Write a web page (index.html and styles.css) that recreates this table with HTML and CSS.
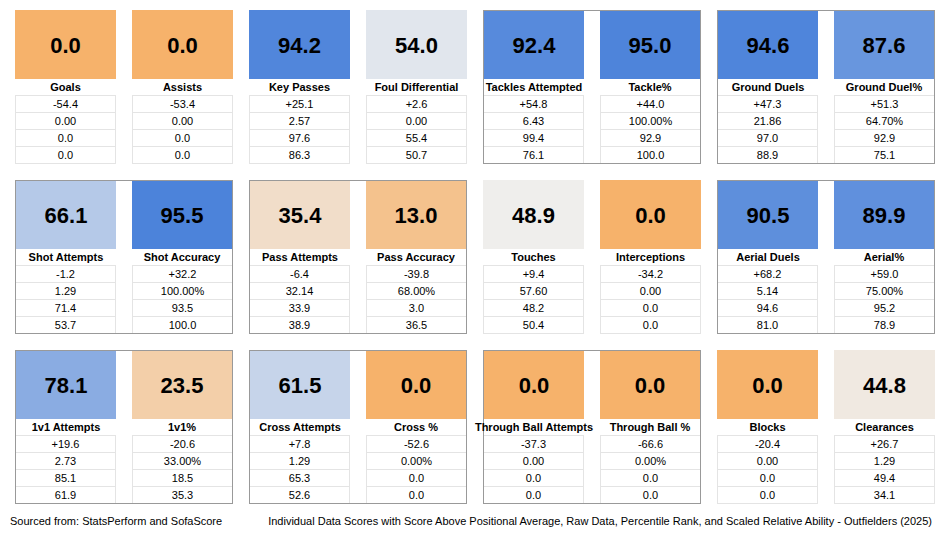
FILE: index.html
```html
<!DOCTYPE html>
<html lang="en">
<head>
<meta charset="utf-8">
<title>Individual Data Scores - Outfielders (2025)</title>
<link rel="stylesheet" href="styles.css">
</head>
<body>
<div class="sheet">
  <div class="band">
    <div class="group">
      <div class="metric"><div class="score" style="background:#F6B26B">0.0</div><div class="label">Goals</div><div class="data"><div class="row">-54.4</div><div class="row">0.00</div><div class="row">0.0</div><div class="row">0.0</div></div></div>
      <div class="metric"><div class="score" style="background:#F6B26B">0.0</div><div class="label">Assists</div><div class="data"><div class="row">-53.4</div><div class="row">0.00</div><div class="row">0.0</div><div class="row">0.0</div></div></div>
    </div>
    <div class="group">
      <div class="metric"><div class="score" style="background:#5186DB">94.2</div><div class="label">Key Passes</div><div class="data"><div class="row">+25.1</div><div class="row">2.57</div><div class="row">97.6</div><div class="row">86.3</div></div></div>
      <div class="metric"><div class="score" style="background:#E1E6ED">54.0</div><div class="label">Foul Differential</div><div class="data"><div class="row">+2.6</div><div class="row">0.00</div><div class="row">55.4</div><div class="row">50.7</div></div></div>
    </div>
    <div class="group boxed">
      <div class="metric"><div class="score" style="background:#578ADC">92.4</div><div class="label">Tackles Attempted</div><div class="data"><div class="row">+54.8</div><div class="row">6.43</div><div class="row">99.4</div><div class="row">76.1</div></div></div>
      <div class="metric"><div class="score" style="background:#4E84DA">95.0</div><div class="label">Tackle%</div><div class="data"><div class="row">+44.0</div><div class="row">100.00%</div><div class="row">92.9</div><div class="row">100.0</div></div></div>
    </div>
    <div class="group boxed">
      <div class="metric"><div class="score" style="background:#4F85DB">94.6</div><div class="label">Ground Duels</div><div class="data"><div class="row">+47.3</div><div class="row">21.86</div><div class="row">97.0</div><div class="row">88.9</div></div></div>
      <div class="metric"><div class="score" style="background:#6896DE">87.6</div><div class="label">Ground Duel%</div><div class="data"><div class="row">+51.3</div><div class="row">64.70%</div><div class="row">92.9</div><div class="row">75.1</div></div></div>
    </div>
  </div>

  <div class="band">
    <div class="group boxed">
      <div class="metric"><div class="score" style="background:#B5C9E8">66.1</div><div class="label">Shot Attempts</div><div class="data"><div class="row">-1.2</div><div class="row">1.29</div><div class="row">71.4</div><div class="row">53.7</div></div></div>
      <div class="metric"><div class="score" style="background:#4C83DA">95.5</div><div class="label">Shot Accuracy</div><div class="data"><div class="row">+32.2</div><div class="row">100.00%</div><div class="row">93.5</div><div class="row">100.0</div></div></div>
    </div>
    <div class="group boxed">
      <div class="metric"><div class="score" style="background:#F1DDC9">35.4</div><div class="label">Pass Attempts</div><div class="data"><div class="row">-6.4</div><div class="row">32.14</div><div class="row">33.9</div><div class="row">38.9</div></div></div>
      <div class="metric"><div class="score" style="background:#F4C28D">13.0</div><div class="label">Pass Accuracy</div><div class="data"><div class="row">-39.8</div><div class="row">68.00%</div><div class="row">3.0</div><div class="row">36.5</div></div></div>
    </div>
    <div class="group">
      <div class="metric"><div class="score" style="background:#EFEEEC">48.9</div><div class="label">Touches</div><div class="data"><div class="row">+9.4</div><div class="row">57.60</div><div class="row">48.2</div><div class="row">50.4</div></div></div>
      <div class="metric"><div class="score" style="background:#F6B26B">0.0</div><div class="label">Interceptions</div><div class="data"><div class="row">-34.2</div><div class="row">0.00</div><div class="row">0.0</div><div class="row">0.0</div></div></div>
    </div>
    <div class="group boxed">
      <div class="metric"><div class="score" style="background:#5E8FDC">90.5</div><div class="label">Aerial Duels</div><div class="data"><div class="row">+68.2</div><div class="row">5.14</div><div class="row">94.6</div><div class="row">81.0</div></div></div>
      <div class="metric"><div class="score" style="background:#6090DD">89.9</div><div class="label">Aerial%</div><div class="data"><div class="row">+59.0</div><div class="row">75.00%</div><div class="row">95.2</div><div class="row">78.9</div></div></div>
    </div>
  </div>

  <div class="band">
    <div class="group boxed">
      <div class="metric"><div class="score" style="background:#8AACE2">78.1</div><div class="label">1v1 Attempts</div><div class="data"><div class="row">+19.6</div><div class="row">2.73</div><div class="row">85.1</div><div class="row">61.9</div></div></div>
      <div class="metric"><div class="score" style="background:#F3CFA9">23.5</div><div class="label">1v1%</div><div class="data"><div class="row">-20.6</div><div class="row">33.00%</div><div class="row">18.5</div><div class="row">35.3</div></div></div>
    </div>
    <div class="group boxed">
      <div class="metric"><div class="score" style="background:#C6D4EA">61.5</div><div class="label">Cross Attempts</div><div class="data"><div class="row">+7.8</div><div class="row">1.29</div><div class="row">65.3</div><div class="row">52.6</div></div></div>
      <div class="metric"><div class="score" style="background:#F6B26B">0.0</div><div class="label">Cross %</div><div class="data"><div class="row">-52.6</div><div class="row">0.00%</div><div class="row">0.0</div><div class="row">0.0</div></div></div>
    </div>
    <div class="group boxed">
      <div class="metric"><div class="score" style="background:#F6B26B">0.0</div><div class="label">Through Ball Attempts</div><div class="data"><div class="row">-37.3</div><div class="row">0.00</div><div class="row">0.0</div><div class="row">0.0</div></div></div>
      <div class="metric"><div class="score" style="background:#F6B26B">0.0</div><div class="label">Through Ball %</div><div class="data"><div class="row">-66.6</div><div class="row">0.00%</div><div class="row">0.0</div><div class="row">0.0</div></div></div>
    </div>
    <div class="group">
      <div class="metric"><div class="score" style="background:#F6B26B">0.0</div><div class="label">Blocks</div><div class="data"><div class="row">-20.4</div><div class="row">0.00</div><div class="row">0.0</div><div class="row">0.0</div></div></div>
      <div class="metric"><div class="score" style="background:#F0E9E1">44.8</div><div class="label">Clearances</div><div class="data"><div class="row">+26.7</div><div class="row">1.29</div><div class="row">49.4</div><div class="row">34.1</div></div></div>
    </div>
  </div>

  <div class="footer">
    <span class="source">Sourced from: StatsPerform and SofaScore</span>
    <span class="caption">Individual Data Scores with Score Above Positional Average, Raw Data, Percentile Rank, and Scaled Relative Ability - Outfielders (2025)</span>
  </div>
</div>
</body>
</html>
```

FILE: styles.css
```css
html, body {
  margin: 0;
  padding: 0;
  background: #ffffff;
}

body {
  font-family: "Liberation Sans", Arial, sans-serif;
  color: #000000;
  width: 951px;
  height: 537px;
  overflow: hidden;
}

.sheet {
  padding: 10px 0 0 15px;
  display: flex;
  flex-direction: column;
  gap: 16px;
}

.band {
  display: grid;
  grid-template-columns: repeat(4, 218px);
  column-gap: 16px;
}

.group {
  box-sizing: border-box;
  height: 154px;
  display: grid;
  grid-template-columns: 1fr 1fr;
  column-gap: 16px;
}

.group.boxed {
  border: 1px solid #999999;
}

.metric {
  display: flex;
  flex-direction: column;
  min-width: 0;
}

.score {
  flex: 1;
  display: flex;
  align-items: center;
  justify-content: center;
  padding-top: 2px;
  box-sizing: border-box;
  font-size: 22px;
  font-weight: bold;
}

.label {
  height: 16px;
  display: flex;
  justify-content: center;
  white-space: nowrap;
  font-size: 11px;
  font-weight: bold;
  line-height: 16px;
}

.data {
  display: flex;
  flex-direction: column;
}

.row {
  box-sizing: border-box;
  height: 17px;
  border-top: 1px solid #e4e4e4;
  border-left: 1px solid #e4e4e4;
  border-right: 1px solid #e4e4e4;
  text-align: center;
  font-size: 11px;
  line-height: 16px;
}

.row:last-child {
  height: 18px;
  border-bottom: 1px solid #e4e4e4;
}

.group.boxed .metric:first-child .row {
  border-left: none;
}

.group.boxed .metric:last-child .row {
  border-right: none;
}

.group.boxed .row:last-child {
  height: 17px;
  border-bottom: none;
}

.footer {
  display: flex;
  justify-content: space-between;
  margin: -7px 0 0 -5px;
  padding-right: 19px;
  font-size: 11px;
  line-height: 16px;
}
```
